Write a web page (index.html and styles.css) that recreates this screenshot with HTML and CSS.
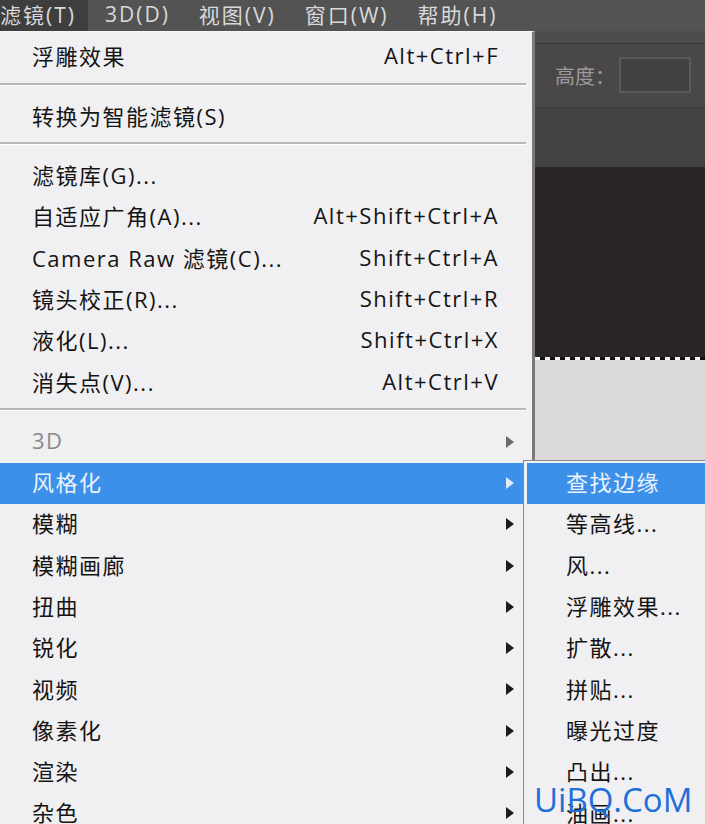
FILE: index.html
```html
<!DOCTYPE html>
<html lang="zh-CN">
<head>
  <meta charset="UTF-8">
  <title>滤镜 - 风格化</title>
  <link rel="stylesheet" href="styles.css">
</head>
<body>
<div class="menubar">
  <span class="menubar-item active">滤镜(T)</span>
  <span class="menubar-item">3D(D)</span>
  <span class="menubar-item">视图(V)</span>
  <span class="menubar-item">窗口(W)</span>
  <span class="menubar-item">帮助(H)</span>
</div>
<div class="options-bar">
  <span class="opt-label">高度：</span>
  <span class="opt-input"></span>
</div>
<div class="tab-bar"></div>
<div class="canvas">
  <div class="canvas-dark"></div>
  <div class="marquee"></div>
  <div class="canvas-image"></div>
</div>

<!-- 滤镜菜单 -->
<div class="menu main-menu">
  <div class="menu-item">浮雕效果<span class="shortcut">Alt+Ctrl+F</span></div>
  <div class="menu-sep"></div>
  <div class="menu-item">转换为智能滤镜(S)</div>
  <div class="menu-sep"></div>
  <div class="menu-item">滤镜库(G)...</div>
  <div class="menu-item">自适应广角(A)...<span class="shortcut">Alt+Shift+Ctrl+A</span></div>
  <div class="menu-item">Camera Raw 滤镜(C)...<span class="shortcut">Shift+Ctrl+A</span></div>
  <div class="menu-item">镜头校正(R)...<span class="shortcut">Shift+Ctrl+R</span></div>
  <div class="menu-item">液化(L)...<span class="shortcut">Shift+Ctrl+X</span></div>
  <div class="menu-item">消失点(V)...<span class="shortcut">Alt+Ctrl+V</span></div>
  <div class="menu-sep"></div>
  <div class="menu-item disabled">3D<span class="arrow"></span></div>
  <div class="menu-item selected">风格化<span class="arrow"></span></div>
  <div class="menu-item">模糊<span class="arrow"></span></div>
  <div class="menu-item">模糊画廊<span class="arrow"></span></div>
  <div class="menu-item">扭曲<span class="arrow"></span></div>
  <div class="menu-item">锐化<span class="arrow"></span></div>
  <div class="menu-item">视频<span class="arrow"></span></div>
  <div class="menu-item">像素化<span class="arrow"></span></div>
  <div class="menu-item">渲染<span class="arrow"></span></div>
  <div class="menu-item">杂色<span class="arrow"></span></div>
</div>

<!-- 风格化子菜单 -->
<div class="menu sub-menu">
  <div class="menu-item selected">查找边缘</div>
  <div class="menu-item">等高线...</div>
  <div class="menu-item">风...</div>
  <div class="menu-item">浮雕效果...</div>
  <div class="menu-item">扩散...</div>
  <div class="menu-item">拼贴...</div>
  <div class="menu-item">曝光过度</div>
  <div class="menu-item">凸出...</div>
  <div class="menu-item">油画...</div>
</div>

<div class="watermark">UiBQ.CoM</div>
</body>
</html>
```

FILE: styles.css
```css
body {
  margin: 0;
  padding: 0;
  height: 824px;
  overflow: hidden;
  position: relative;
  background-color: #2a2628;
  font-family: "Open Sans", "Noto Sans CJK SC", sans-serif;
}

.menubar {
  display: flex;
  height: 31px;
  background-color: #535353;
  color: #d9d9d9;
  font-size: 21px;
  letter-spacing: 2px;
}

.menubar-item {
  display: flex;
  align-items: center;
  padding: 0 12px 3px 17px;
}

.menubar-item.active {
  background-color: #3e3e3e;
  padding-left: 0;
}

.options-bar {
  display: flex;
  align-items: center;
  height: 64px;
  padding-left: 555px;
  background-color: #4a4749;
  border-top: 12px solid #4e4c4e;
  border-bottom: 1px solid #3c3a3c;
  box-shadow: inset 0 1px 0 #3a3839;
}

.opt-label {
  color: #9d9a9c;
  font-size: 20px;
}

.opt-input {
  width: 68px;
  height: 32px;
  margin-left: 4px;
  border: 2px solid #5c595b;
  background-color: #444143;
}

.tab-bar {
  height: 59px;
  background-color: #454244;
}

.canvas-dark {
  height: 190px;
  background-color: #2a2628;
}

.marquee {
  height: 3px;
  background: repeating-linear-gradient(90deg, #111 0, #111 5px, #f4f4f4 5px, #f4f4f4 10px);
}

.canvas-image {
  height: 480px;
  background-color: #dad8da;
}

.menu {
  position: absolute;
  background-color: #f0eff1;
  color: #141414;
  font-size: 22px;
  letter-spacing: 1.5px;
  box-sizing: border-box;
}

.main-menu {
  left: 0;
  top: 31px;
  bottom: 0;
  width: 535px;
  padding-top: 5.3px;
  border-top: 1px solid #f7f7f7;
  border-right: 3px solid #7b797b;
}

.sub-menu {
  left: 523px;
  top: 460px;
  bottom: 0;
  width: 220px;
  padding-top: 2px;
  border-top: 1px solid #8c8b8d;
  border-left: 1px solid #8c8b8d;
}

.menu-item {
  position: relative;
  display: flex;
  align-items: center;
  height: 41.3px;
  box-sizing: border-box;
  padding: 0 33px 5px 32px;
  white-space: nowrap;
}

.sub-menu .menu-item {
  margin-left: 3px;
  padding-left: 39px;
}

.menu-item.selected {
  background-color: #3d90e9;
  color: #eaf3fc;
}

.menu-item.disabled {
  color: #8a898b;
}

.shortcut {
  margin-left: auto;
}

.arrow {
  position: absolute;
  right: 18px;
  top: 14px;
  width: 0;
  height: 0;
  border-left: 8px solid #1c1c1c;
  border-top: 6px solid transparent;
  border-bottom: 6px solid transparent;
}

.disabled .arrow {
  border-left-color: #6a696b;
}

.selected .arrow {
  border-left-color: #dbe9f8;
}

.menu-sep {
  margin: 4px 6px 11px 0;
  border-top: 2px solid #b7b6b8;
  border-bottom: 1px solid #ffffff;
}

.watermark {
  position: absolute;
  left: 534px;
  top: 777px;
  color: #1f6fd9;
  font-size: 33px;
  letter-spacing: 0;
  font-family: "Open Sans", sans-serif;
}
```
